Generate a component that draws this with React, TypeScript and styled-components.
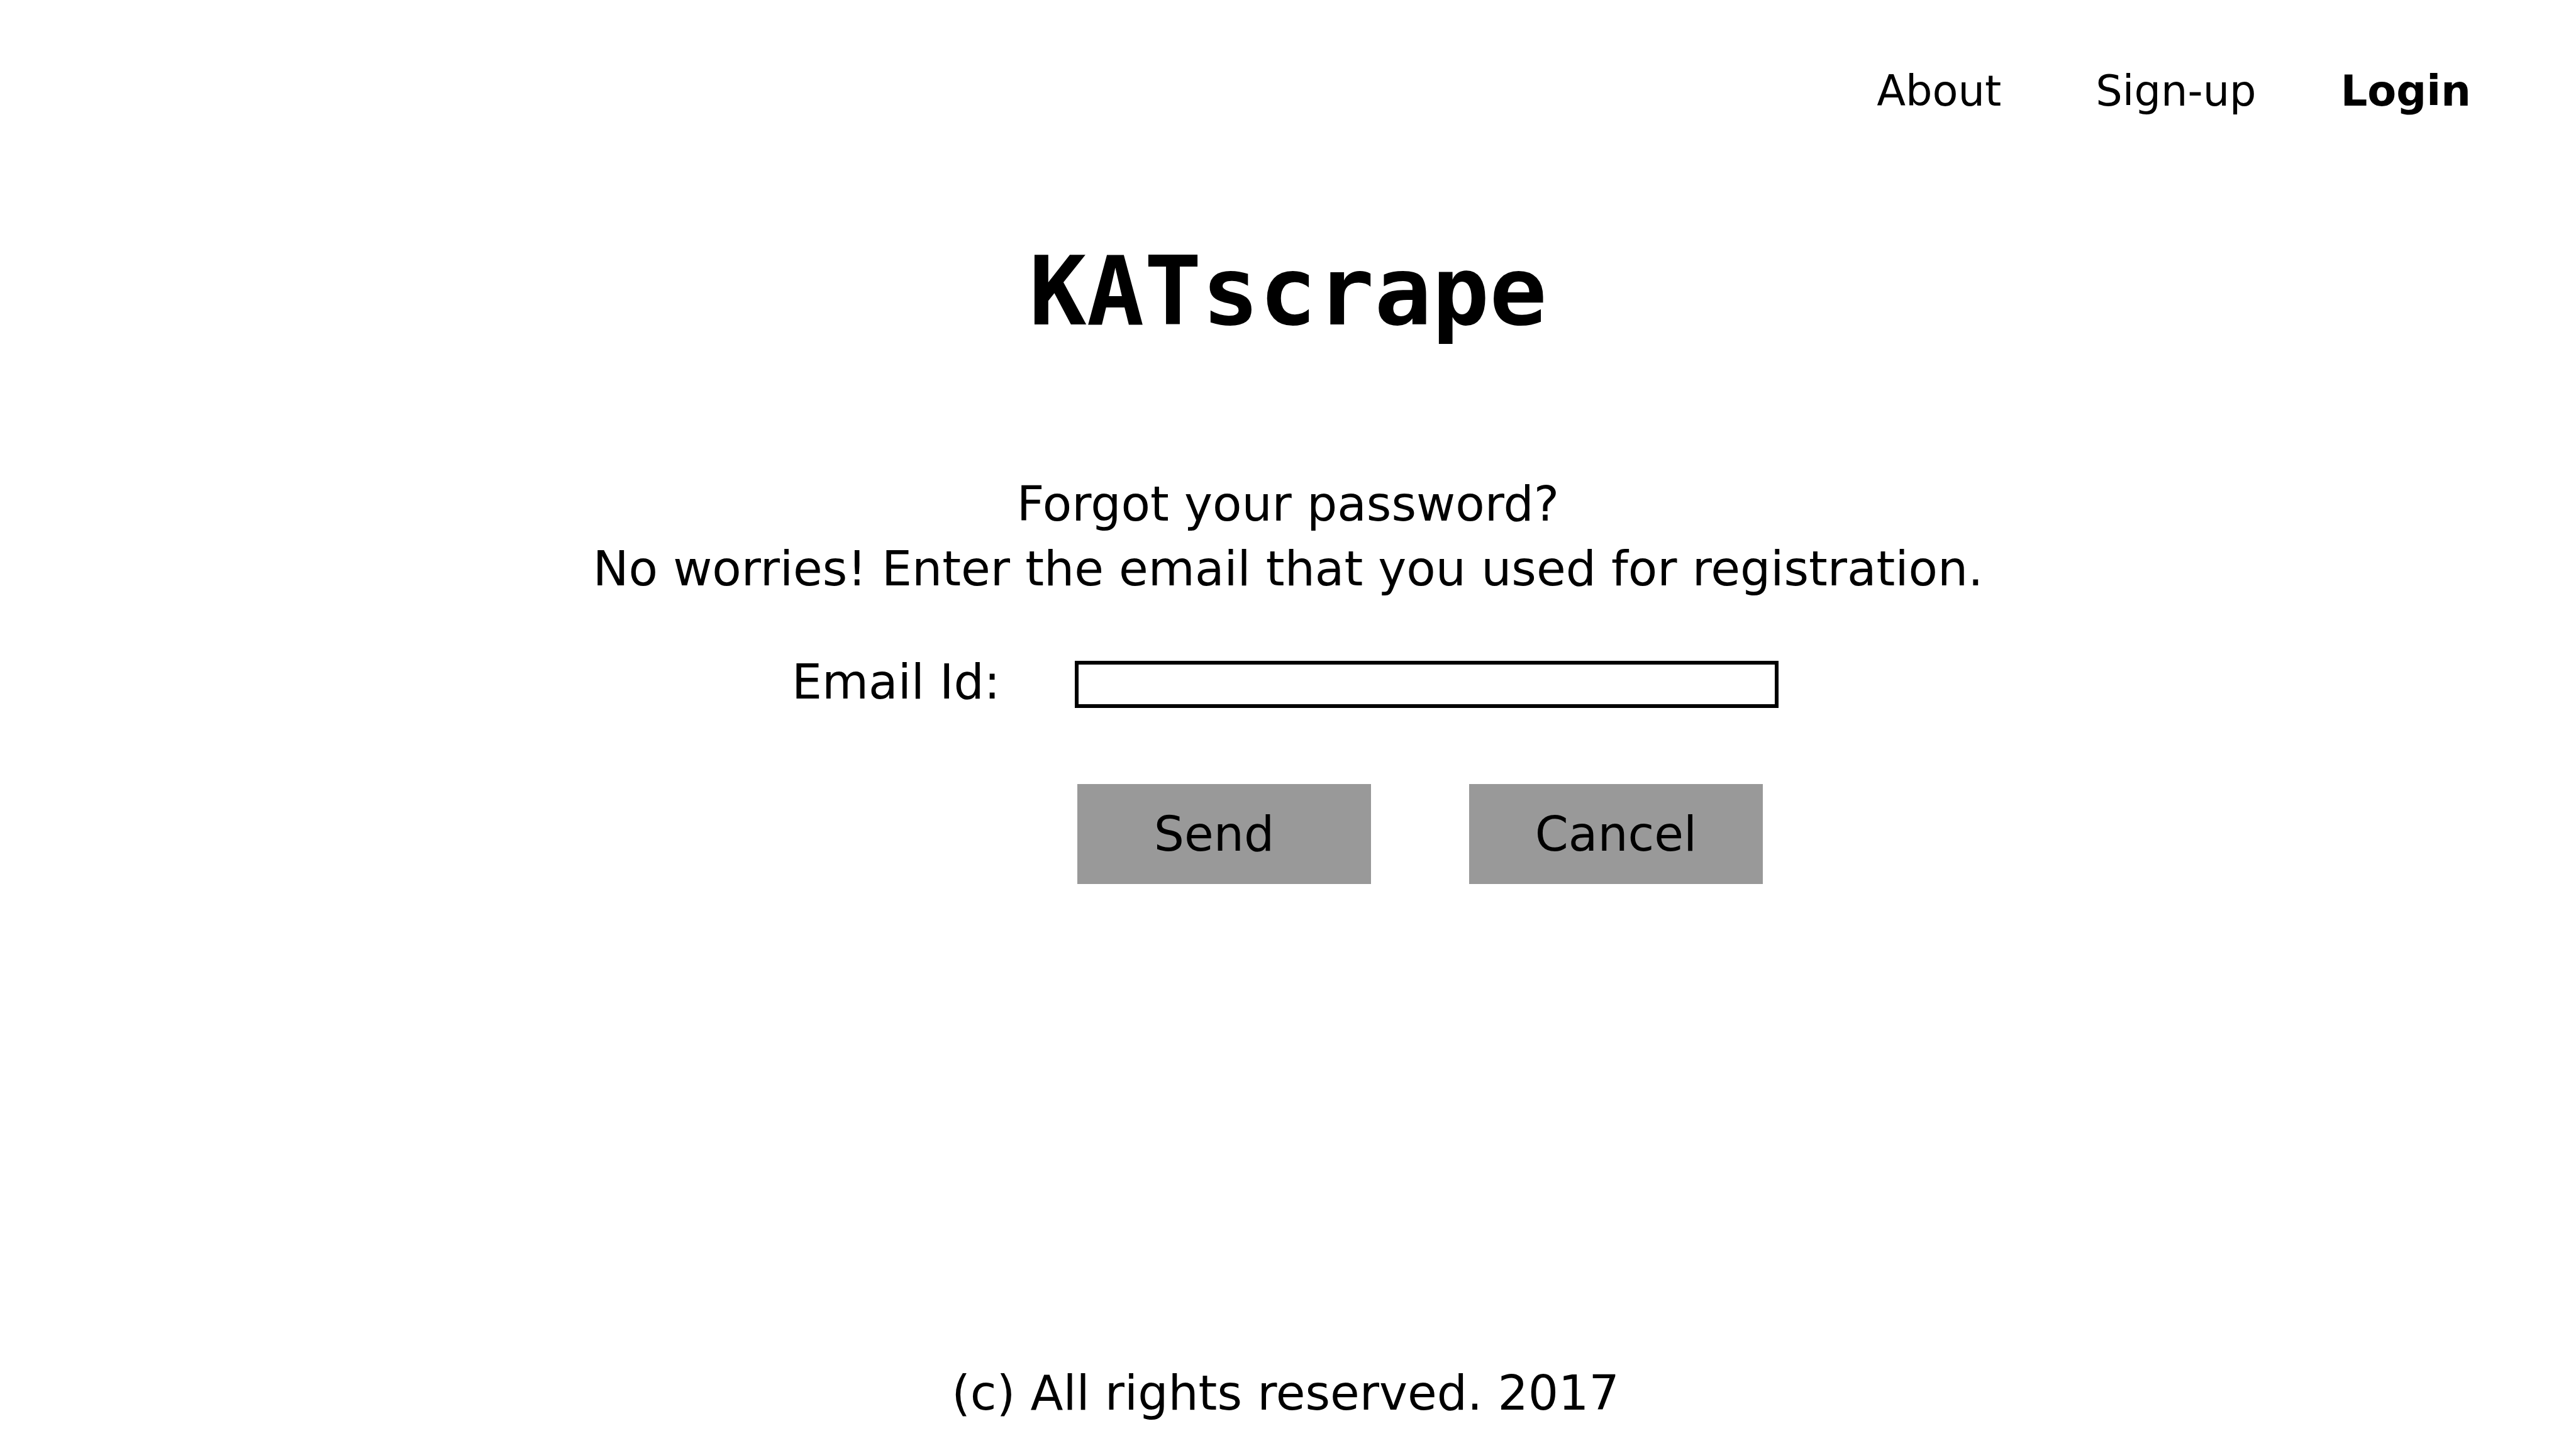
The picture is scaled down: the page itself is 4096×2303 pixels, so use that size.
import React from "react";
import styled, { createGlobalStyle } from "styled-components";

const GlobalStyle = createGlobalStyle`
  *, *::before, *::after { box-sizing: border-box; }
  body {
    margin: 0;
    background: #ffffff;
    color: #000000;
    font-family: "DejaVu Sans", Verdana, sans-serif;
    font-size: 76px;
    line-height: 103px;
  }
`;

const Page = styled.div`
  min-height: 100vh;
  display: flex;
  flex-direction: column;
`;

const Nav = styled.nav`
  display: flex;
  justify-content: flex-end;
  padding: 105px 167px 0 0;
`;

const NavLink = styled.a<{ $space?: number }>`
  margin-left: ${({ $space = 0 }) => $space}px;
  color: inherit;
  font-size: 67px;
  line-height: 80px;
  text-decoration: none;

  &[aria-current="page"] {
    font-weight: 700;
  }
`;

const Main = styled.main`
  display: flex;
  flex-direction: column;
  align-items: center;
`;

const Title = styled.h1`
  margin: 189px 0 0;
  font-family: "DejaVu Sans Mono", monospace;
  font-size: 152px;
  font-weight: 700;
  line-height: 180px;
`;

const Message = styled.p`
  margin: 196px 0 0;
  text-align: center;
`;

const Line = styled.span`
  display: block;
`;

const Form = styled.form`
  display: grid;
  grid-template-columns: 450px minmax(0, 1119px);
  align-items: baseline;
  row-gap: 111px;
  width: 100%;
  max-width: 1578px;
  margin-top: 77px;
`;

const EmailInput = styled.input`
  width: 100%;
  height: 75px;
  padding: 0 16px;
  border: 6px solid #000000;
  border-radius: 0;
  background: #ffffff;
  color: inherit;
  font-family: inherit;
  font-size: 67px;
  outline: none;
`;

const Actions = styled.div`
  grid-column: 2;
  display: flex;
  gap: 156px;
  padding-left: 4px;
`;

const Button = styled.button<{ $endSpace?: number }>`
  width: 467px;
  height: 159px;
  padding: 0 ${({ $endSpace = 0 }) => $endSpace}px 0 0;
  border: 0;
  background: #999999;
  color: inherit;
  font: inherit;
  text-align: center;
`;

const Footer = styled.footer`
  margin-top: auto;
  padding: 0 8px 36px 0;
  text-align: center;
`;

export default function App() {
  return (
    <Page>
      <GlobalStyle />
      <Nav>
        <NavLink href="#about">About</NavLink>
        <NavLink href="#sign-up" $space={150}>Sign-up</NavLink>
        <NavLink href="#login" $space={134} aria-current="page">Login</NavLink>
      </Nav>
      <Main>
        <Title>KATscrape</Title>
        <Message>
          <Line>Forgot your password?</Line>
          <Line>No worries! Enter the email that you used for registration.</Line>
        </Message>
        <Form onSubmit={(event) => event.preventDefault()}>
          <label htmlFor="email">Email Id:</label>
          <EmailInput id="email" type="email" />
          <Actions>
            <Button type="submit" $endSpace={32}>Send</Button>
            <Button type="button">Cancel</Button>
          </Actions>
        </Form>
      </Main>
      <Footer>(c) All rights reserved. 2017</Footer>
    </Page>
  );
}
